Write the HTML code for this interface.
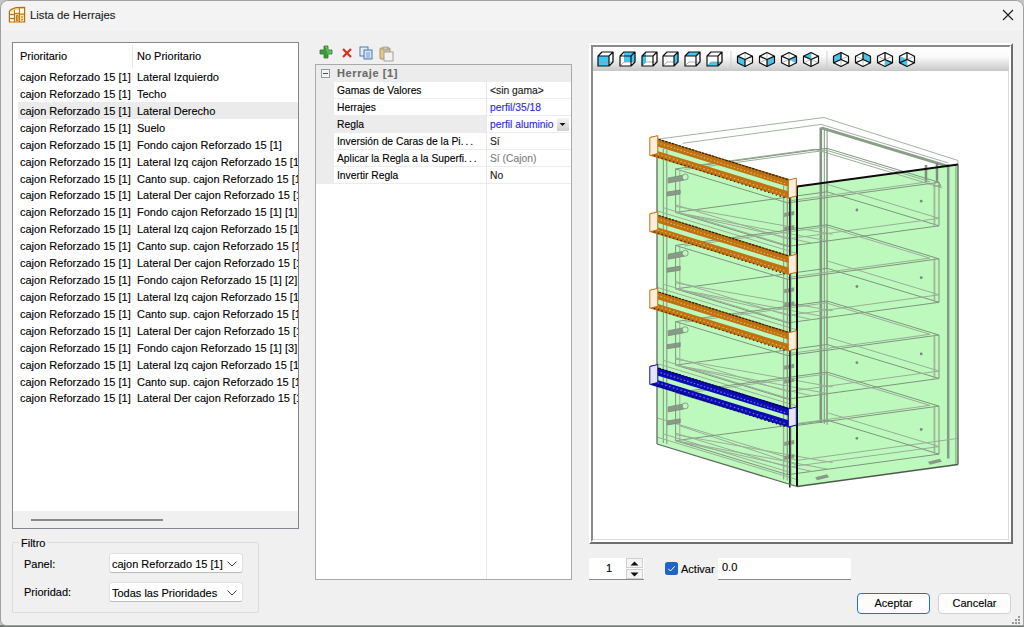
<!DOCTYPE html>
<html><head><meta charset="utf-8"><style>
*{margin:0;padding:0;box-sizing:border-box}
html,body{width:1024px;height:627px;overflow:hidden;background:linear-gradient(#c4c4c4 0,#c4c4c4 625px,#6f7f6f 625px)}
body{font-family:"Liberation Sans",sans-serif;font-size:11px;color:#000;position:relative;-webkit-text-stroke:0.12px currentColor}
.abs{position:absolute}
#win{position:absolute;left:0;top:0;width:1024px;height:626px;background:#f0f0f0;border:1px solid #a0a0a0;border-radius:8px 8px 0 6px}
#title{position:absolute;left:0;top:0;width:1022px;height:30px;background:#f3f3f3;border-radius:8px 8px 0 0}
.t{position:absolute;white-space:nowrap;line-height:13px}
#list{left:12px;top:42px;width:287px;height:487px;background:#fff;border:1px solid #828790;overflow:hidden}
.hdr{position:absolute;left:0;top:0;width:285px;height:24px}
.hdr span,.row span{position:absolute;top:3px;white-space:nowrap;line-height:13px}
.hdr span{top:7px}
.hsep{position:absolute;left:119px;top:2px;width:1px;height:23px;background:#e8e8e8}
.row{position:absolute;left:0;width:285px;height:17px}
.row.sel{background:#ebebeb;left:5px}
.row.sel span.c1{left:2px}.row.sel span.c2{left:119px}
.c1{left:7px}.c2{left:124px}
.hscroll{position:absolute;left:0;top:468px;width:285px;height:17px;background:#f0f0f0}
.hscroll i{position:absolute;left:18px;top:8px;width:132px;height:2px;background:#8a8a8a}
.grp{border:1px solid #dcdcdc;border-radius:2px}
.combo{background:#fff;border:1px solid #e0e0e0;border-bottom-color:#bdbdbd;border-radius:3px}
.combo span{position:absolute;left:2px;top:4px;white-space:nowrap;line-height:13px}
.chev{position:absolute;right:5px;top:7px}
#grid{left:315px;top:64px;width:257px;height:516px;background:#fff;border:1px solid #a9a9a9;overflow:hidden}
.gcat{position:absolute;left:0;top:0;width:255px;height:17px;background:#ececec}
.gcat span{position:absolute;left:21px;top:2px;font-weight:bold;color:#6a6a6a;font-size:11px;letter-spacing:0.6px;line-height:13px}
.grow{position:absolute;left:0;width:255px;height:17px;background:linear-gradient(to right,#ececec 0,#ececec 18px,#fff 18px)}
.grow::after{content:"";position:absolute;left:18px;right:0;bottom:0;height:1px;background:#ececec}
.grow.sel{background:linear-gradient(to right,#ececec 0,#ececec 170px,#fff 170px)}
.grow span{position:absolute;top:2px;white-space:nowrap;line-height:13px;font-size:10.3px}
.gk{left:21px}.gv{left:174px}
.gsep{position:absolute;left:170px;top:17px;width:1px;height:500px;background:#e8e8e8}
.ddbtn{position:absolute;left:241px;top:53px;width:12px;height:13px;background:linear-gradient(#f4f4f4,#cfcfcf);}
.ddbtn svg{position:absolute;left:0;top:0}
#view{left:589px;top:43px;width:424px;height:501px;border-top:2px solid #fff;border-left:2px solid #fff;border-right:2px solid #6e6e6e;border-bottom:2px solid #6e6e6e;background:#fff}
#vin{position:absolute;left:0;top:0;right:0;bottom:0;border-top:2px solid #8a8a8a;border-left:2px solid #8a8a8a;border-right:2px solid #fff;border-bottom:2px solid #fff;overflow:hidden;background:#fff}
#tb{position:absolute;left:0;top:0;width:416px;height:24px;background:linear-gradient(#ffffff 0%,#fafafa 40%,#c8c8c8 100%)}
#tb svg{position:absolute;left:0;top:0}
.spin{background:#fff;border-bottom:1px solid #8a8a8a}
.spin span{position:absolute;left:15px;top:4px;width:10px;text-align:center;line-height:13px}
.sb{position:absolute;left:37px;width:17px;height:10px;background:#f4f4f4;border:1px solid #cfcfcf}
.sb svg{position:absolute;left:3px;top:2px}
.sb.up{top:0}.sb.dn{top:11px}
.chk svg{display:block}
.edit{background:#fff;border-bottom:1px solid #8a8a8a}
.edit span{position:absolute;left:4px;top:3px;line-height:13px}
.btn{position:absolute;background:#fdfdfd;border:1px solid #d0d0d0;border-radius:4px;text-align:center;line-height:19px}
.btn.def{border-color:#2a6ec8}

</style></head><body>
<div id="win"><div id="title"></div></div>
<svg class="abs" style="left:6px;top:4px" width="22" height="22" viewBox="0 0 22 22">
<path d="M3.4 7.5 Q4 5.5 6.5 4.8 L10 3.6 L18.6 3.3 L18.6 18 L3.4 18 Z" fill="#fbe2a6" stroke="#b5700f" stroke-width="1.2"/>
<rect x="4.3" y="7.8" width="3.6" height="1.6" fill="#fff"/><rect x="4.3" y="11.6" width="3.6" height="1.8" fill="#fff"/><rect x="4.3" y="15.6" width="3.6" height="1.6" fill="#fff"/>
<rect x="9" y="6.2" width="3.8" height="1.8" fill="#fff"/><rect x="14" y="5" width="4" height="4" fill="#fff"/>
<path d="M8.4 5.6 V18 M13.4 3.5 V18 M3.6 10.4 H8.4 M3.6 14.6 H8.4 M8.4 9.6 H13.4 M13.4 10.2 H18.6 M10.4 11.5 V16.5 H12 V11.5 Z" stroke="#b5700f" stroke-width="1" fill="none"/>
<circle cx="16" cy="13" r="0.8" fill="#b5700f"/><circle cx="16" cy="15.6" r="0.8" fill="#b5700f"/>
</svg>
<div class="t" style="left:30px;top:9px;font-size:11.3px;color:#1c1c1c">Lista de Herrajes</div>
<svg class="abs" style="left:1002px;top:9px" width="12" height="12" viewBox="0 0 12 12"><path d="M1 1 L11 11 M11 1 L1 11" stroke="#1a1a1a" stroke-width="1.1"/></svg>
<div id="list" class="abs"><div class="hdr"><span class="c1">Prioritario</span><span class="c2">No Prioritario</span><i class="hsep"></i></div><div class="row" style="top:25.00px"><span class="c1">cajon Reforzado 15 [1]</span><span class="c2">Lateral Izquierdo</span></div><div class="row" style="top:41.92px"><span class="c1">cajon Reforzado 15 [1]</span><span class="c2">Techo</span></div><div class="row sel" style="top:58.84px"><span class="c1">cajon Reforzado 15 [1]</span><span class="c2">Lateral Derecho</span></div><div class="row" style="top:75.76px"><span class="c1">cajon Reforzado 15 [1]</span><span class="c2">Suelo</span></div><div class="row" style="top:92.68px"><span class="c1">cajon Reforzado 15 [1]</span><span class="c2">Fondo cajon Reforzado 15 [1]</span></div><div class="row" style="top:109.60px"><span class="c1">cajon Reforzado 15 [1]</span><span class="c2">Lateral Izq cajon Reforzado 15 [1]</span></div><div class="row" style="top:126.52px"><span class="c1">cajon Reforzado 15 [1]</span><span class="c2">Canto sup. cajon Reforzado 15 [1]</span></div><div class="row" style="top:143.44px"><span class="c1">cajon Reforzado 15 [1]</span><span class="c2">Lateral Der cajon Reforzado 15 [1]</span></div><div class="row" style="top:160.36px"><span class="c1">cajon Reforzado 15 [1]</span><span class="c2">Fondo cajon Reforzado 15 [1] [1]</span></div><div class="row" style="top:177.28px"><span class="c1">cajon Reforzado 15 [1]</span><span class="c2">Lateral Izq cajon Reforzado 15 [1]</span></div><div class="row" style="top:194.20px"><span class="c1">cajon Reforzado 15 [1]</span><span class="c2">Canto sup. cajon Reforzado 15 [1]</span></div><div class="row" style="top:211.12px"><span class="c1">cajon Reforzado 15 [1]</span><span class="c2">Lateral Der cajon Reforzado 15 [1]</span></div><div class="row" style="top:228.04px"><span class="c1">cajon Reforzado 15 [1]</span><span class="c2">Fondo cajon Reforzado 15 [1] [2]</span></div><div class="row" style="top:244.96px"><span class="c1">cajon Reforzado 15 [1]</span><span class="c2">Lateral Izq cajon Reforzado 15 [1]</span></div><div class="row" style="top:261.88px"><span class="c1">cajon Reforzado 15 [1]</span><span class="c2">Canto sup. cajon Reforzado 15 [1]</span></div><div class="row" style="top:278.80px"><span class="c1">cajon Reforzado 15 [1]</span><span class="c2">Lateral Der cajon Reforzado 15 [1]</span></div><div class="row" style="top:295.72px"><span class="c1">cajon Reforzado 15 [1]</span><span class="c2">Fondo cajon Reforzado 15 [1] [3]</span></div><div class="row" style="top:312.64px"><span class="c1">cajon Reforzado 15 [1]</span><span class="c2">Lateral Izq cajon Reforzado 15 [1]</span></div><div class="row" style="top:329.56px"><span class="c1">cajon Reforzado 15 [1]</span><span class="c2">Canto sup. cajon Reforzado 15 [1]</span></div><div class="row" style="top:346.48px"><span class="c1">cajon Reforzado 15 [1]</span><span class="c2">Lateral Der cajon Reforzado 15 [1]</span></div><div class="hscroll"><i></i></div></div>
<div class="abs grp" style="left:12px;top:542px;width:247px;height:71px"></div>
<div class="t" style="left:19px;top:537px;padding:0 2px;background:#f0f0f0">Filtro</div>
<div class="t" style="left:24px;top:558px">Panel:</div>
<div class="t" style="left:24px;top:586px">Prioridad:</div>
<div class="abs combo" style="left:109px;top:553px;width:134px;height:20px"><span>cajon Reforzado 15 [1]</span><svg class="chev" width="10" height="6" viewBox="0 0 10 6"><path d="M0.5 0.5 L5 5 L9.5 0.5" stroke="#444" stroke-width="1" fill="none"/></svg></div>
<div class="abs combo" style="left:109px;top:582px;width:134px;height:20px"><span>Todas las Prioridades</span><svg class="chev" width="10" height="6" viewBox="0 0 10 6"><path d="M0.5 0.5 L5 5 L9.5 0.5" stroke="#444" stroke-width="1" fill="none"/></svg></div>
<svg class="abs" style="left:318px;top:44px" width="80" height="18" viewBox="0 0 80 18">
<path d="M6 2 H10 V6 H14 V10 H10 V14 H6 V10 H2 V6 H6 Z" fill="#3f9b3a" stroke="#2d7a2a" stroke-width="0.8"/>
<path d="M7 3 H9 V7 H13 V9 H9" stroke="#8fd08a" stroke-width="0.8" fill="none"/>
<path d="M25 5 L33 13 M33 5 L25 13" stroke="#d8301c" stroke-width="2.2"/>
<rect x="42" y="3" width="8" height="9" fill="#e8eef8" stroke="#3a6ab0" stroke-width="0.9"/>
<rect x="46" y="6" width="8" height="9" fill="#d6e4f6" stroke="#3a6ab0" stroke-width="0.9"/>
<path d="M48 9 H52 M48 11 H52 M48 13 H52" stroke="#3a6ab0" stroke-width="0.6"/>
<rect x="62" y="4" width="10" height="11" rx="1" fill="#e2c98a" stroke="#a58a50" stroke-width="0.9"/>
<rect x="65" y="3" width="5" height="3" fill="#c8c8c8" stroke="#888" stroke-width="0.6"/>
<rect x="66" y="8" width="9" height="9" fill="#f2f2f2" stroke="#9a9a9a" stroke-width="0.9"/>
</svg>
<div id="grid" class="abs"><div class="gcat"><svg class="abs" style="left:5px;top:4px" width="9" height="9" viewBox="0 0 9 9"><rect x="0.5" y="0.5" width="8" height="8" fill="#f4f4f4" stroke="#9a9a9a"/><path d="M2 4.5 H7" stroke="#3050a0" stroke-width="1"/></svg><span>Herraje [1]</span></div><div class="grow" style="top:17px"><span class="gk">Gamas de Valores</span><span class="gv" style="color:#1a1a1a">&lt;sin gama&gt;</span></div><div class="grow" style="top:34px"><span class="gk">Herrajes</span><span class="gv" style="color:#2a2ae0">perfil/35/18</span></div><div class="grow sel" style="top:51px"><span class="gk">Regla</span><span class="gv" style="color:#2a2ae0">perfil aluminio</span></div><div class="grow" style="top:68px"><span class="gk">Inversi&oacute;n de Caras de la Pi<i style="font-style:normal;letter-spacing:2px">...</i></span><span class="gv" style="color:#1a1a1a">S&iacute;</span></div><div class="grow" style="top:85px"><span class="gk">Aplicar la Regla a la Superfi<i style="font-style:normal;letter-spacing:2px">...</i></span><span class="gv" style="color:#808080">S&iacute; (Cajon)</span></div><div class="grow" style="top:102px"><span class="gk">Invertir Regla</span><span class="gv" style="color:#1a1a1a">No</span></div><i class="gsep"></i><div class="ddbtn"><svg width="11" height="12" viewBox="0 0 11 12"><path d="M2.5 5 H8.5 L5.5 8 Z" fill="#111"/></svg></div></div>
<div id="view" class="abs"><div id="vin"><i style="position:absolute;left:0;top:0;width:416px;height:493px;border-right:1px solid #dadada;border-bottom:1px solid #dadada"></i><div id="tb"><svg width="416" height="24" viewBox="0 0 416 24"><polygon points="5,9 9,5 20,5 20,15 16,19 5,19" fill="#fff"/><polygon points="5,9 16,9 16,19 5,19" fill="#3cc8f4"/><path d="M9 15 H20 V5 M9 15 L5 19" stroke="#999" stroke-width="0.8" fill="none"/><path d="M5 9 H16 V19 H5 Z M5 9 L9 5 H20 V15 L16 19 M16 9 L20 5" stroke="#111" stroke-width="1.2" fill="none" stroke-linejoin="round"/><polygon points="27,9 31,5 42,5 42,15 38,19 27,19" fill="#fff"/><polygon points="31,5 42,5 42,15 31,15" fill="#3cc8f4"/><path d="M31 15 H42 V5 M31 15 L27 19" stroke="#999" stroke-width="0.8" fill="none"/><path d="M27 9 H38 V19 H27 Z M27 9 L31 5 H42 V15 L38 19 M38 9 L42 5" stroke="#111" stroke-width="1.2" fill="none" stroke-linejoin="round"/><polygon points="49,9 53,5 64,5 64,15 60,19 49,19" fill="#fff"/><polygon points="49,9 53,5 53,15 49,19" fill="#3cc8f4"/><path d="M53 15 H64 V5 M53 15 L49 19" stroke="#999" stroke-width="0.8" fill="none"/><path d="M49 9 H60 V19 H49 Z M49 9 L53 5 H64 V15 L60 19 M60 9 L64 5" stroke="#111" stroke-width="1.2" fill="none" stroke-linejoin="round"/><polygon points="70,9 74,5 85,5 85,15 81,19 70,19" fill="#fff"/><polygon points="81,9 85,5 85,15 81,19" fill="#3cc8f4"/><path d="M74 15 H85 V5 M74 15 L70 19" stroke="#999" stroke-width="0.8" fill="none"/><path d="M70 9 H81 V19 H70 Z M70 9 L74 5 H85 V15 L81 19 M81 9 L85 5" stroke="#111" stroke-width="1.2" fill="none" stroke-linejoin="round"/><polygon points="92,9 96,5 107,5 107,15 103,19 92,19" fill="#fff"/><polygon points="92,9 96,5 107,5 103,9" fill="#3cc8f4"/><path d="M96 15 H107 V5 M96 15 L92 19" stroke="#999" stroke-width="0.8" fill="none"/><path d="M92 9 H103 V19 H92 Z M92 9 L96 5 H107 V15 L103 19 M103 9 L107 5" stroke="#111" stroke-width="1.2" fill="none" stroke-linejoin="round"/><polygon points="114,9 118,5 129,5 129,15 125,19 114,19" fill="#fff"/><polygon points="114,19 118,15 129,15 125,19" fill="#3cc8f4"/><path d="M118 15 H129 V5 M118 15 L114 19" stroke="#999" stroke-width="0.8" fill="none"/><path d="M114 9 H125 V19 H114 Z M114 9 L118 5 H129 V15 L125 19 M125 9 L129 5" stroke="#111" stroke-width="1.2" fill="none" stroke-linejoin="round"/><line x1="138" y1="4" x2="138" y2="20" stroke="#cfcfcf" stroke-width="1"/><line x1="234" y1="4" x2="234" y2="20" stroke="#cfcfcf" stroke-width="1"/><polygon points="152,5.5 159.5,9.2 159.5,15.8 152,19.5 144.5,15.8 144.5,9.2" fill="#fff"/><polygon points="152,12.5 144.5,9.2 144.5,15.8 152,19.5" fill="#3cc8f4"/><line x1="152" y1="12.5" x2="152" y2="5.5" stroke="#aaa" stroke-width="0.8"/><line x1="152" y1="12.5" x2="144.5" y2="15.8" stroke="#aaa" stroke-width="0.8"/><line x1="152" y1="12.5" x2="159.5" y2="15.8" stroke="#aaa" stroke-width="0.8"/><line x1="152" y1="12.5" x2="152" y2="19.5" stroke="#111" stroke-width="1.3"/><line x1="152" y1="12.5" x2="144.5" y2="9.2" stroke="#111" stroke-width="1.3"/><line x1="152" y1="12.5" x2="159.5" y2="9.2" stroke="#111" stroke-width="1.3"/><polygon points="152,5.5 159.5,9.2 159.5,15.8 152,19.5 144.5,15.8 144.5,9.2" fill="none" stroke="#111" stroke-width="1.2" stroke-linejoin="round"/><polygon points="174,5.5 181.5,9.2 181.5,15.8 174,19.5 166.5,15.8 166.5,9.2" fill="#fff"/><polygon points="174,12.5 174,19.5 181.5,15.8 181.5,9.2" fill="#3cc8f4"/><line x1="174" y1="12.5" x2="174" y2="5.5" stroke="#aaa" stroke-width="0.8"/><line x1="174" y1="12.5" x2="166.5" y2="15.8" stroke="#aaa" stroke-width="0.8"/><line x1="174" y1="12.5" x2="181.5" y2="15.8" stroke="#aaa" stroke-width="0.8"/><line x1="174" y1="12.5" x2="174" y2="19.5" stroke="#111" stroke-width="1.3"/><line x1="174" y1="12.5" x2="166.5" y2="9.2" stroke="#111" stroke-width="1.3"/><line x1="174" y1="12.5" x2="181.5" y2="9.2" stroke="#111" stroke-width="1.3"/><polygon points="174,5.5 181.5,9.2 181.5,15.8 174,19.5 166.5,15.8 166.5,9.2" fill="none" stroke="#111" stroke-width="1.2" stroke-linejoin="round"/><polygon points="196,5.5 203.5,9.2 203.5,15.8 196,19.5 188.5,15.8 188.5,9.2" fill="#fff"/><polygon points="203.5,9.2 203.5,15.8 196,12.5" fill="#3cc8f4"/><line x1="196" y1="12.5" x2="196" y2="5.5" stroke="#aaa" stroke-width="0.8"/><line x1="196" y1="12.5" x2="188.5" y2="15.8" stroke="#aaa" stroke-width="0.8"/><line x1="196" y1="12.5" x2="203.5" y2="15.8" stroke="#aaa" stroke-width="0.8"/><line x1="196" y1="12.5" x2="196" y2="19.5" stroke="#111" stroke-width="1.3"/><line x1="196" y1="12.5" x2="188.5" y2="9.2" stroke="#111" stroke-width="1.3"/><line x1="196" y1="12.5" x2="203.5" y2="9.2" stroke="#111" stroke-width="1.3"/><polygon points="196,5.5 203.5,9.2 203.5,15.8 196,19.5 188.5,15.8 188.5,9.2" fill="none" stroke="#111" stroke-width="1.2" stroke-linejoin="round"/><polygon points="218,5.5 225.5,9.2 225.5,15.8 218,19.5 210.5,15.8 210.5,9.2" fill="#fff"/><polygon points="210.5,9.2 218,5.5 218,12.5" fill="#3cc8f4"/><line x1="218" y1="12.5" x2="218" y2="5.5" stroke="#aaa" stroke-width="0.8"/><line x1="218" y1="12.5" x2="210.5" y2="15.8" stroke="#aaa" stroke-width="0.8"/><line x1="218" y1="12.5" x2="225.5" y2="15.8" stroke="#aaa" stroke-width="0.8"/><line x1="218" y1="12.5" x2="218" y2="19.5" stroke="#111" stroke-width="1.3"/><line x1="218" y1="12.5" x2="210.5" y2="9.2" stroke="#111" stroke-width="1.3"/><line x1="218" y1="12.5" x2="225.5" y2="9.2" stroke="#111" stroke-width="1.3"/><polygon points="218,5.5 225.5,9.2 225.5,15.8 218,19.5 210.5,15.8 210.5,9.2" fill="none" stroke="#111" stroke-width="1.2" stroke-linejoin="round"/><polygon points="248,5.5 255.5,9.2 255.5,15.8 248,19.5 240.5,15.8 240.5,9.2" fill="#fff"/><polygon points="248,12.5 248,5.5 240.5,9.2 240.5,15.8" fill="#3cc8f4"/><line x1="248" y1="12.5" x2="248" y2="19.5" stroke="#aaa" stroke-width="0.8"/><line x1="248" y1="12.5" x2="240.5" y2="9.2" stroke="#aaa" stroke-width="0.8"/><line x1="248" y1="12.5" x2="255.5" y2="9.2" stroke="#aaa" stroke-width="0.8"/><line x1="248" y1="12.5" x2="248" y2="5.5" stroke="#111" stroke-width="1.3"/><line x1="248" y1="12.5" x2="240.5" y2="15.8" stroke="#111" stroke-width="1.3"/><line x1="248" y1="12.5" x2="255.5" y2="15.8" stroke="#111" stroke-width="1.3"/><polygon points="248,5.5 255.5,9.2 255.5,15.8 248,19.5 240.5,15.8 240.5,9.2" fill="none" stroke="#111" stroke-width="1.2" stroke-linejoin="round"/><polygon points="270,5.5 277.5,9.2 277.5,15.8 270,19.5 262.5,15.8 262.5,9.2" fill="#fff"/><polygon points="270,12.5 270,5.5 277.5,9.2 277.5,15.8" fill="#3cc8f4"/><line x1="270" y1="12.5" x2="270" y2="19.5" stroke="#aaa" stroke-width="0.8"/><line x1="270" y1="12.5" x2="262.5" y2="9.2" stroke="#aaa" stroke-width="0.8"/><line x1="270" y1="12.5" x2="277.5" y2="9.2" stroke="#aaa" stroke-width="0.8"/><line x1="270" y1="12.5" x2="270" y2="5.5" stroke="#111" stroke-width="1.3"/><line x1="270" y1="12.5" x2="262.5" y2="15.8" stroke="#111" stroke-width="1.3"/><line x1="270" y1="12.5" x2="277.5" y2="15.8" stroke="#111" stroke-width="1.3"/><polygon points="270,5.5 277.5,9.2 277.5,15.8 270,19.5 262.5,15.8 262.5,9.2" fill="none" stroke="#111" stroke-width="1.2" stroke-linejoin="round"/><polygon points="292,5.5 299.5,9.2 299.5,15.8 292,19.5 284.5,15.8 284.5,9.2" fill="#fff"/><polygon points="292,12.5 299.5,15.8 292,19.5" fill="#3cc8f4"/><line x1="292" y1="12.5" x2="292" y2="19.5" stroke="#aaa" stroke-width="0.8"/><line x1="292" y1="12.5" x2="284.5" y2="9.2" stroke="#aaa" stroke-width="0.8"/><line x1="292" y1="12.5" x2="299.5" y2="9.2" stroke="#aaa" stroke-width="0.8"/><line x1="292" y1="12.5" x2="292" y2="5.5" stroke="#111" stroke-width="1.3"/><line x1="292" y1="12.5" x2="284.5" y2="15.8" stroke="#111" stroke-width="1.3"/><line x1="292" y1="12.5" x2="299.5" y2="15.8" stroke="#111" stroke-width="1.3"/><polygon points="292,5.5 299.5,9.2 299.5,15.8 292,19.5 284.5,15.8 284.5,9.2" fill="none" stroke="#111" stroke-width="1.2" stroke-linejoin="round"/><polygon points="314,5.5 321.5,9.2 321.5,15.8 314,19.5 306.5,15.8 306.5,9.2" fill="#fff"/><polygon points="314,12.5 306.5,15.8 314,19.5" fill="#3cc8f4"/><polygon points="314,12.5 306.5,9.2 306.5,15.8" fill="#3cc8f4"/><line x1="314" y1="12.5" x2="314" y2="19.5" stroke="#aaa" stroke-width="0.8"/><line x1="314" y1="12.5" x2="306.5" y2="9.2" stroke="#aaa" stroke-width="0.8"/><line x1="314" y1="12.5" x2="321.5" y2="9.2" stroke="#aaa" stroke-width="0.8"/><line x1="314" y1="12.5" x2="314" y2="5.5" stroke="#111" stroke-width="1.3"/><line x1="314" y1="12.5" x2="306.5" y2="15.8" stroke="#111" stroke-width="1.3"/><line x1="314" y1="12.5" x2="321.5" y2="15.8" stroke="#111" stroke-width="1.3"/><polygon points="314,5.5 321.5,9.2 321.5,15.8 314,19.5 306.5,15.8 306.5,9.2" fill="none" stroke="#111" stroke-width="1.2" stroke-linejoin="round"/></svg></div><svg class="abs" style="left:0;top:0" width="420" height="497" viewBox="0 0 420 497"><polygon points="64.0,97.0 204.0,139.5 204.0,439.5 64.0,397.0" fill="#bdf9bd" stroke="none" stroke-width="1" /><polygon points="204.0,139.5 365.0,117.5 365.0,417.5 204.0,439.5" fill="#bdf9bd" stroke="none" stroke-width="1" /><polyline points="62.0,92.5 231.0,70.5 365.0,113.5 365.0,118.0" fill="none" stroke="#a3b3a1" stroke-width="1"/><polyline points="89.6,96.3 228.1,77.4 354.8,115.8" fill="none" stroke="#a3b3a1" stroke-width="1"/><line x1="227.8" y1="80.4" x2="227.8" y2="375.9" stroke="#7f957d" stroke-width="2.6" /><line x1="231.3" y1="81.4" x2="231.3" y2="376.9" stroke="#7f957d" stroke-width="1" /><line x1="234.1" y1="82.3" x2="234.1" y2="377.8" stroke="#7f957d" stroke-width="1" /><line x1="228.4" y1="80.9" x2="354.4" y2="119.1" stroke="#8a9e88" stroke-width="3" /><line x1="333.0" y1="118.0" x2="333.0" y2="135.0" stroke="#7d8f7b" stroke-width="2.5" /><line x1="344.0" y1="116.0" x2="344.0" y2="133.0" stroke="#7d8f7b" stroke-width="2.5" /><path d="M340.0 139.0 l4 -6 l4 6 z" fill="none" stroke="#7d8f7b" stroke-width="1"/><polyline points="102.5,118.5 221.6,102.2 349.0,140.9" fill="none" stroke="#9aae98" stroke-width="1"/><line x1="70.3" y1="101.9" x2="70.3" y2="395.9" stroke="#7f957d" stroke-width="1" /><line x1="73.8" y1="103.0" x2="73.8" y2="397.0" stroke="#7f957d" stroke-width="1" /><line x1="190.7" y1="138.5" x2="190.7" y2="432.5" stroke="#7f957d" stroke-width="1" /><line x1="194.2" y1="139.5" x2="194.2" y2="433.5" stroke="#7f957d" stroke-width="1" /><line x1="197.7" y1="140.6" x2="197.7" y2="434.6" stroke="#7f957d" stroke-width="1" /><line x1="197.7" y1="137.6" x2="197.7" y2="437.6" stroke="#7f957d" stroke-width="1" /><line x1="355.2" y1="117.5" x2="355.2" y2="411.5" stroke="#86998a" stroke-width="2.5" /><line x1="362.9" y1="116.9" x2="362.9" y2="416.9" stroke="#7f957d" stroke-width="1" /><polyline points="64.0,370.9 204.0,413.4 365.0,391.4" fill="none" stroke="#9aae98" stroke-width="1"/><polyline points="86.4,378.7 205.8,418.5" fill="none" stroke="#9aae98" stroke-width="1"/><line x1="82.6" y1="165.4" x2="194.6" y2="199.4" stroke="#7f957d" stroke-width="1" /><line x1="234.0" y1="144.8" x2="346.0" y2="178.8" stroke="#7f957d" stroke-width="1" /><line x1="82.6" y1="121.9" x2="194.6" y2="155.9" stroke="#7f957d" stroke-width="1" /><line x1="234.0" y1="101.3" x2="346.0" y2="135.3" stroke="#7f957d" stroke-width="1" /><line x1="82.6" y1="165.4" x2="82.6" y2="121.9" stroke="#7f957d" stroke-width="1" /><line x1="234.0" y1="144.8" x2="234.0" y2="101.3" stroke="#7f957d" stroke-width="1" /><line x1="194.6" y1="199.4" x2="194.6" y2="155.9" stroke="#7f957d" stroke-width="1" /><line x1="346.0" y1="178.8" x2="346.0" y2="135.3" stroke="#7f957d" stroke-width="1" /><line x1="82.6" y1="165.4" x2="234.0" y2="144.8" stroke="#7f957d" stroke-width="1" /><line x1="82.6" y1="121.9" x2="234.0" y2="101.3" stroke="#7f957d" stroke-width="1" /><line x1="194.6" y1="199.4" x2="346.0" y2="178.8" stroke="#7f957d" stroke-width="1" /><line x1="194.6" y1="155.9" x2="346.0" y2="135.3" stroke="#7f957d" stroke-width="1" /><polyline points="91.6,122.5 233.3,103.2 336.9,134.6 195.2,154.0" fill="none" stroke="#9aae98" stroke-width="1"/><polyline points="82.6,157.9 194.6,191.9 346.0,171.3 234.0,137.3" fill="none" stroke="#9aae98" stroke-width="1"/><line x1="86.8" y1="166.7" x2="86.8" y2="123.2" stroke="#9aae98" stroke-width="1" /><line x1="190.4" y1="198.2" x2="190.4" y2="154.7" stroke="#9aae98" stroke-width="1" /><line x1="341.1" y1="179.4" x2="341.1" y2="135.9" stroke="#9aae98" stroke-width="1" /><line x1="341.8" y1="177.5" x2="341.8" y2="134.0" stroke="#9aae98" stroke-width="1" /><line x1="82.6" y1="165.4" x2="218.8" y2="196.1" stroke="#9aae98" stroke-width="1" /><line x1="82.6" y1="165.4" x2="234.9" y2="193.9" stroke="#9aae98" stroke-width="1" /><line x1="82.6" y1="159.4" x2="239.7" y2="187.3" stroke="#9aae98" stroke-width="1" /><line x1="64.0" y1="163.9" x2="204.0" y2="206.4" stroke="#9aae98" stroke-width="1" /><line x1="70.3" y1="160.7" x2="197.7" y2="199.4" stroke="#9aae98" stroke-width="1" /><g fill="#8a9a88" stroke="#7a8a78" stroke-width="0.8"><path d="M75.2 131.0 l16 -3 v5 l-16 3 z"/><circle cx="92.2" cy="130.0" r="3" fill="#bdf9bd"/><path d="M74.2 145.0 l13 -2 v4 l-13 2 z"/></g><g fill="#8a9a88"><path d="M191.2 166.1 l10 -2 v4 l-10 2 z"/><path d="M191.2 180.1 l10 -2 v4 l-10 2 z"/></g><circle cx="263.9" cy="163.0" r="1.4" fill="#7a8a78"/><circle cx="328.2" cy="154.2" r="1.4" fill="#7a8a78"/><line x1="82.6" y1="241.9" x2="194.6" y2="275.9" stroke="#7f957d" stroke-width="1" /><line x1="234.0" y1="221.3" x2="346.0" y2="255.3" stroke="#7f957d" stroke-width="1" /><line x1="82.6" y1="198.4" x2="194.6" y2="232.4" stroke="#7f957d" stroke-width="1" /><line x1="234.0" y1="177.8" x2="346.0" y2="211.8" stroke="#7f957d" stroke-width="1" /><line x1="82.6" y1="241.9" x2="82.6" y2="198.4" stroke="#7f957d" stroke-width="1" /><line x1="234.0" y1="221.3" x2="234.0" y2="177.8" stroke="#7f957d" stroke-width="1" /><line x1="194.6" y1="275.9" x2="194.6" y2="232.4" stroke="#7f957d" stroke-width="1" /><line x1="346.0" y1="255.3" x2="346.0" y2="211.8" stroke="#7f957d" stroke-width="1" /><line x1="82.6" y1="241.9" x2="234.0" y2="221.3" stroke="#7f957d" stroke-width="1" /><line x1="82.6" y1="198.4" x2="234.0" y2="177.8" stroke="#7f957d" stroke-width="1" /><line x1="194.6" y1="275.9" x2="346.0" y2="255.3" stroke="#7f957d" stroke-width="1" /><line x1="194.6" y1="232.4" x2="346.0" y2="211.8" stroke="#7f957d" stroke-width="1" /><polyline points="91.6,199.0 233.3,179.7 336.9,211.1 195.2,230.5" fill="none" stroke="#9aae98" stroke-width="1"/><polyline points="82.6,234.4 194.6,268.4 346.0,247.8 234.0,213.8" fill="none" stroke="#9aae98" stroke-width="1"/><line x1="86.8" y1="243.2" x2="86.8" y2="199.7" stroke="#9aae98" stroke-width="1" /><line x1="190.4" y1="274.7" x2="190.4" y2="231.2" stroke="#9aae98" stroke-width="1" /><line x1="341.1" y1="255.9" x2="341.1" y2="212.4" stroke="#9aae98" stroke-width="1" /><line x1="341.8" y1="254.0" x2="341.8" y2="210.5" stroke="#9aae98" stroke-width="1" /><line x1="82.6" y1="241.9" x2="218.8" y2="272.6" stroke="#9aae98" stroke-width="1" /><line x1="82.6" y1="241.9" x2="234.9" y2="270.4" stroke="#9aae98" stroke-width="1" /><line x1="82.6" y1="235.9" x2="239.7" y2="263.8" stroke="#9aae98" stroke-width="1" /><line x1="64.0" y1="240.4" x2="204.0" y2="282.9" stroke="#9aae98" stroke-width="1" /><line x1="70.3" y1="237.2" x2="197.7" y2="275.9" stroke="#9aae98" stroke-width="1" /><g fill="#8a9a88" stroke="#7a8a78" stroke-width="0.8"><path d="M75.2 207.2 l16 -3 v5 l-16 3 z"/><circle cx="92.2" cy="206.2" r="3" fill="#bdf9bd"/><path d="M74.2 221.2 l13 -2 v4 l-13 2 z"/></g><g fill="#8a9a88"><path d="M191.2 242.3 l10 -2 v4 l-10 2 z"/><path d="M191.2 256.3 l10 -2 v4 l-10 2 z"/></g><circle cx="263.9" cy="239.5" r="1.4" fill="#7a8a78"/><circle cx="328.2" cy="230.7" r="1.4" fill="#7a8a78"/><line x1="82.6" y1="318.1" x2="194.6" y2="352.1" stroke="#7f957d" stroke-width="1" /><line x1="234.0" y1="297.5" x2="346.0" y2="331.5" stroke="#7f957d" stroke-width="1" /><line x1="82.6" y1="274.6" x2="194.6" y2="308.6" stroke="#7f957d" stroke-width="1" /><line x1="234.0" y1="254.0" x2="346.0" y2="288.0" stroke="#7f957d" stroke-width="1" /><line x1="82.6" y1="318.1" x2="82.6" y2="274.6" stroke="#7f957d" stroke-width="1" /><line x1="234.0" y1="297.5" x2="234.0" y2="254.0" stroke="#7f957d" stroke-width="1" /><line x1="194.6" y1="352.1" x2="194.6" y2="308.6" stroke="#7f957d" stroke-width="1" /><line x1="346.0" y1="331.5" x2="346.0" y2="288.0" stroke="#7f957d" stroke-width="1" /><line x1="82.6" y1="318.1" x2="234.0" y2="297.5" stroke="#7f957d" stroke-width="1" /><line x1="82.6" y1="274.6" x2="234.0" y2="254.0" stroke="#7f957d" stroke-width="1" /><line x1="194.6" y1="352.1" x2="346.0" y2="331.5" stroke="#7f957d" stroke-width="1" /><line x1="194.6" y1="308.6" x2="346.0" y2="288.0" stroke="#7f957d" stroke-width="1" /><polyline points="91.6,275.2 233.3,255.9 336.9,287.3 195.2,306.7" fill="none" stroke="#9aae98" stroke-width="1"/><polyline points="82.6,310.6 194.6,344.6 346.0,324.0 234.0,290.0" fill="none" stroke="#9aae98" stroke-width="1"/><line x1="86.8" y1="319.4" x2="86.8" y2="275.9" stroke="#9aae98" stroke-width="1" /><line x1="190.4" y1="350.9" x2="190.4" y2="307.4" stroke="#9aae98" stroke-width="1" /><line x1="341.1" y1="332.1" x2="341.1" y2="288.6" stroke="#9aae98" stroke-width="1" /><line x1="341.8" y1="330.2" x2="341.8" y2="286.7" stroke="#9aae98" stroke-width="1" /><line x1="82.6" y1="318.1" x2="218.8" y2="348.8" stroke="#9aae98" stroke-width="1" /><line x1="82.6" y1="318.1" x2="234.9" y2="346.6" stroke="#9aae98" stroke-width="1" /><line x1="82.6" y1="312.1" x2="239.7" y2="340.0" stroke="#9aae98" stroke-width="1" /><line x1="64.0" y1="316.6" x2="204.0" y2="359.1" stroke="#9aae98" stroke-width="1" /><line x1="70.3" y1="313.4" x2="197.7" y2="352.1" stroke="#9aae98" stroke-width="1" /><g fill="#8a9a88" stroke="#7a8a78" stroke-width="0.8"><path d="M75.2 283.7 l16 -3 v5 l-16 3 z"/><circle cx="92.2" cy="282.7" r="3" fill="#bdf9bd"/><path d="M74.2 297.7 l13 -2 v4 l-13 2 z"/></g><g fill="#8a9a88"><path d="M191.2 318.8 l10 -2 v4 l-10 2 z"/><path d="M191.2 332.8 l10 -2 v4 l-10 2 z"/></g><circle cx="263.9" cy="315.7" r="1.4" fill="#7a8a78"/><circle cx="328.2" cy="306.9" r="1.4" fill="#7a8a78"/><line x1="82.6" y1="393.7" x2="194.6" y2="427.7" stroke="#7f957d" stroke-width="1" /><line x1="234.0" y1="373.1" x2="346.0" y2="407.1" stroke="#7f957d" stroke-width="1" /><line x1="82.6" y1="345.7" x2="194.6" y2="379.7" stroke="#7f957d" stroke-width="1" /><line x1="234.0" y1="325.1" x2="346.0" y2="359.1" stroke="#7f957d" stroke-width="1" /><line x1="82.6" y1="393.7" x2="82.6" y2="345.7" stroke="#7f957d" stroke-width="1" /><line x1="234.0" y1="373.1" x2="234.0" y2="325.1" stroke="#7f957d" stroke-width="1" /><line x1="194.6" y1="427.7" x2="194.6" y2="379.7" stroke="#7f957d" stroke-width="1" /><line x1="346.0" y1="407.1" x2="346.0" y2="359.1" stroke="#7f957d" stroke-width="1" /><line x1="82.6" y1="393.7" x2="234.0" y2="373.1" stroke="#7f957d" stroke-width="1" /><line x1="82.6" y1="345.7" x2="234.0" y2="325.1" stroke="#7f957d" stroke-width="1" /><line x1="194.6" y1="427.7" x2="346.0" y2="407.1" stroke="#7f957d" stroke-width="1" /><line x1="194.6" y1="379.7" x2="346.0" y2="359.1" stroke="#7f957d" stroke-width="1" /><polyline points="91.6,346.3 233.3,327.0 336.9,358.4 195.2,377.8" fill="none" stroke="#9aae98" stroke-width="1"/><polyline points="82.6,386.2 194.6,420.2 346.0,399.6 234.0,365.6" fill="none" stroke="#9aae98" stroke-width="1"/><line x1="86.8" y1="395.0" x2="86.8" y2="347.0" stroke="#9aae98" stroke-width="1" /><line x1="190.4" y1="426.5" x2="190.4" y2="378.5" stroke="#9aae98" stroke-width="1" /><line x1="341.1" y1="407.7" x2="341.1" y2="359.7" stroke="#9aae98" stroke-width="1" /><line x1="341.8" y1="405.8" x2="341.8" y2="357.8" stroke="#9aae98" stroke-width="1" /><line x1="82.6" y1="393.7" x2="218.8" y2="424.4" stroke="#9aae98" stroke-width="1" /><line x1="82.6" y1="393.7" x2="234.9" y2="422.2" stroke="#9aae98" stroke-width="1" /><line x1="82.6" y1="387.7" x2="239.7" y2="415.6" stroke="#9aae98" stroke-width="1" /><line x1="64.0" y1="390.1" x2="204.0" y2="432.6" stroke="#9aae98" stroke-width="1" /><line x1="70.3" y1="386.9" x2="197.7" y2="425.6" stroke="#9aae98" stroke-width="1" /><g fill="#8a9a88" stroke="#7a8a78" stroke-width="0.8"><path d="M75.2 359.9 l16 -3 v5 l-16 3 z"/><circle cx="92.2" cy="358.9" r="3" fill="#bdf9bd"/><path d="M74.2 373.9 l13 -2 v4 l-13 2 z"/></g><g fill="#8a9a88"><path d="M191.2 395.0 l10 -2 v4 l-10 2 z"/><path d="M191.2 409.0 l10 -2 v4 l-10 2 z"/></g><circle cx="263.9" cy="391.3" r="1.4" fill="#7a8a78"/><circle cx="328.2" cy="382.5" r="1.4" fill="#7a8a78"/><path d="M222.1 430.2 l12 -3 l2 3 l-12 3 z" fill="#8a9a88"/><path d="M334.9 414.8 l12 -3 l2 3 l-12 3 z" fill="#8a9a88"/><line x1="204.0" y1="139.5" x2="204.0" y2="439.5" stroke="#0c0c0c" stroke-width="2" /><line x1="196.8" y1="144.0" x2="196.8" y2="440.5" stroke="#0c0c0c" stroke-width="1.3" /><line x1="204.0" y1="139.5" x2="365.0" y2="117.5" stroke="#0c0c0c" stroke-width="2" /><line x1="64.0" y1="109.0" x2="64.0" y2="397.0" stroke="#606a60" stroke-width="1.3" /><line x1="64.0" y1="397.0" x2="204.0" y2="439.5" stroke="#606a60" stroke-width="1.3" /><line x1="204.0" y1="439.5" x2="365.0" y2="417.5" stroke="#505850" stroke-width="1.3" /><line x1="365.0" y1="417.5" x2="365.0" y2="117.5" stroke="#505850" stroke-width="1.3" /><polygon points="57.8,89.6 196.3,132.1 196.3,140.1 57.8,97.6" fill="#c07210" stroke="none" stroke-width="1" /><polygon points="57.8,102.1 196.3,144.6 196.3,151.6 57.8,109.1" fill="#c07210" stroke="none" stroke-width="1" /><line x1="58.8" y1="90.2" x2="195.3" y2="132.7" stroke="#2a2010" stroke-width="1.2" stroke-dasharray="2.5 1"/><line x1="60.8" y1="94.6" x2="193.3" y2="137.1" stroke="#dcb060" stroke-width="1.2" stroke-dasharray="1.5 2"/><line x1="60.8" y1="105.6" x2="193.3" y2="148.1" stroke="#dcb060" stroke-width="1.2" stroke-dasharray="1.5 2.5"/><line x1="60.8" y1="108.6" x2="193.3" y2="151.1" stroke="#2a2010" stroke-width="1.1" stroke-dasharray="1.5 2.5"/><polygon points="56.8,90.6 64.8,88.6 64.8,106.6 56.8,108.6" fill="#fbeedd" stroke="#c07210" stroke-width="1" /><polygon points="195.3,133.1 203.3,131.1 203.3,149.1 195.3,151.1" fill="#fbeedd" stroke="#c07210" stroke-width="1" /><polygon points="57.8,165.8 196.3,208.3 196.3,216.3 57.8,173.8" fill="#c07210" stroke="none" stroke-width="1" /><polygon points="57.8,178.3 196.3,220.8 196.3,227.8 57.8,185.3" fill="#c07210" stroke="none" stroke-width="1" /><line x1="58.8" y1="166.4" x2="195.3" y2="208.9" stroke="#2a2010" stroke-width="1.2" stroke-dasharray="2.5 1"/><line x1="60.8" y1="170.8" x2="193.3" y2="213.3" stroke="#dcb060" stroke-width="1.2" stroke-dasharray="1.5 2"/><line x1="60.8" y1="181.8" x2="193.3" y2="224.3" stroke="#dcb060" stroke-width="1.2" stroke-dasharray="1.5 2.5"/><line x1="60.8" y1="184.8" x2="193.3" y2="227.3" stroke="#2a2010" stroke-width="1.1" stroke-dasharray="1.5 2.5"/><polygon points="56.8,166.8 64.8,164.8 64.8,182.8 56.8,184.8" fill="#fbeedd" stroke="#c07210" stroke-width="1" /><polygon points="195.3,209.3 203.3,207.3 203.3,225.3 195.3,227.3" fill="#fbeedd" stroke="#c07210" stroke-width="1" /><polygon points="57.8,242.3 196.3,284.8 196.3,292.8 57.8,250.3" fill="#c07210" stroke="none" stroke-width="1" /><polygon points="57.8,254.8 196.3,297.3 196.3,304.3 57.8,261.8" fill="#c07210" stroke="none" stroke-width="1" /><line x1="58.8" y1="242.9" x2="195.3" y2="285.4" stroke="#2a2010" stroke-width="1.2" stroke-dasharray="2.5 1"/><line x1="60.8" y1="247.3" x2="193.3" y2="289.8" stroke="#dcb060" stroke-width="1.2" stroke-dasharray="1.5 2"/><line x1="60.8" y1="258.3" x2="193.3" y2="300.8" stroke="#dcb060" stroke-width="1.2" stroke-dasharray="1.5 2.5"/><line x1="60.8" y1="261.3" x2="193.3" y2="303.8" stroke="#2a2010" stroke-width="1.1" stroke-dasharray="1.5 2.5"/><polygon points="56.8,243.3 64.8,241.3 64.8,259.3 56.8,261.3" fill="#fbeedd" stroke="#c07210" stroke-width="1" /><polygon points="195.3,285.8 203.3,283.8 203.3,301.8 195.3,303.8" fill="#fbeedd" stroke="#c07210" stroke-width="1" /><polygon points="57.8,318.5 196.3,361.0 196.3,369.0 57.8,326.5" fill="#0c0cb4" stroke="none" stroke-width="1" /><polygon points="57.8,331.0 196.3,373.5 196.3,380.5 57.8,338.0" fill="#0c0cb4" stroke="none" stroke-width="1" /><line x1="58.8" y1="319.1" x2="195.3" y2="361.6" stroke="#000040" stroke-width="1.2" stroke-dasharray="2.5 1"/><line x1="60.8" y1="323.5" x2="193.3" y2="366.0" stroke="#7070e0" stroke-width="1.2" stroke-dasharray="1.5 2"/><line x1="60.8" y1="334.5" x2="193.3" y2="377.0" stroke="#7070e0" stroke-width="1.2" stroke-dasharray="1.5 2.5"/><line x1="60.8" y1="337.5" x2="193.3" y2="380.0" stroke="#000040" stroke-width="1.1" stroke-dasharray="1.5 2.5"/><polygon points="56.8,319.5 64.8,317.5 64.8,335.5 56.8,337.5" fill="#e6e6f6" stroke="#0c0cb4" stroke-width="1" /><polygon points="195.3,362.0 203.3,360.0 203.3,378.0 195.3,380.0" fill="#e6e6f6" stroke="#0c0cb4" stroke-width="1" /></svg></div></div>
<div class="abs spin" style="left:589px;top:558px;width:55px;height:22px"><span>1</span>
<div class="sb up"><svg width="9" height="5" viewBox="0 0 9 5"><path d="M0.5 4.5 L4.5 0.5 L8.5 4.5 Z" fill="#111"/></svg></div>
<div class="sb dn"><svg width="9" height="5" viewBox="0 0 9 5"><path d="M0.5 0.5 L4.5 4.5 L8.5 0.5 Z" fill="#111"/></svg></div></div>
<div class="abs chk" style="left:665px;top:562px"><svg width="13" height="13" viewBox="0 0 13 13"><rect x="0" y="0" width="13" height="13" rx="2.5" fill="#1f63c6"/><path d="M3.3 6.8 L5.5 9 L9.8 4.3" stroke="#fff" stroke-width="1" fill="none"/></svg></div>
<div class="t" style="left:681px;top:563px">Activar</div>
<div class="abs edit" style="left:718px;top:558px;width:133px;height:22px"><span>0.0</span></div>
<div class="btn def" style="left:857px;top:593px;width:73px;height:21px">Aceptar</div>
<div class="btn" style="left:938px;top:593px;width:73px;height:21px">Cancelar</div>
<svg class="abs" style="left:1011px;top:615px" width="10" height="10" viewBox="0 0 10 10"><g fill="#999"><rect x="7" y="1" width="2" height="2"/><rect x="4" y="4" width="2" height="2"/><rect x="7" y="4" width="2" height="2"/><rect x="1" y="7" width="2" height="2"/><rect x="4" y="7" width="2" height="2"/><rect x="7" y="7" width="2" height="2"/></g></svg>
</body></html>
